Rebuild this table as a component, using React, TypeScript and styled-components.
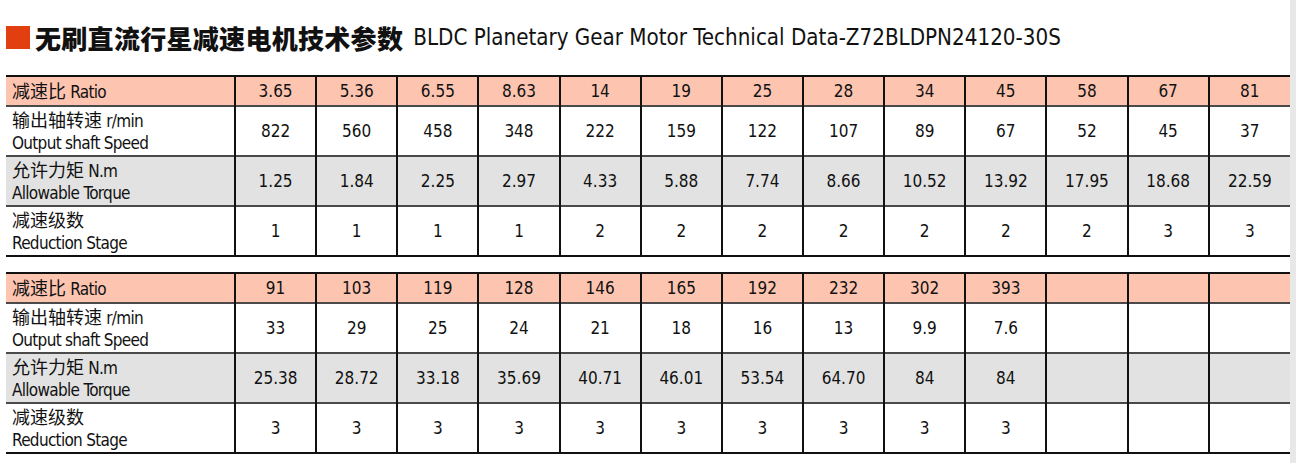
import React from "react";
import styled, { createGlobalStyle } from "styled-components";

const GlobalStyle = createGlobalStyle`
  html, body {
    margin: 0;
    padding: 0;
    background: #fff;
  }
  body {
    font-family: "DejaVu Sans Condensed", "Noto Sans CJK SC", sans-serif;
    color: #111;
  }
`;

const Page = styled.div`
  display: flex;
  width: 1296px;
  height: 463px;
  overflow: hidden;
`;

const Content = styled.div`
  flex: 1;
  padding: 20px 0 0 6px;
`;

const ScrollStrip = styled.div`
  width: 6px;
  background: #e8e8e8;
`;

const Title = styled.h1`
  display: flex;
  align-items: center;
  gap: 5px;
  margin: 0 0 21px;
  height: 34px;
  font-weight: normal;
  white-space: nowrap;
`;

const Marker = styled.span`
  width: 24px;
  height: 23px;
  background: #e13f10;
`;

const TitleCn = styled.span`
  font-family: "Noto Sans CJK SC", sans-serif;
  font-weight: 900;
  font-size: 26px;
  letter-spacing: 0.3px;
`;

const TitleEn = styled.span`
  font-family: "DejaVu Sans Condensed", sans-serif;
  font-size: 22.2px;
  margin-left: 5px;
`;

const Table = styled.table`
  width: 1284px;
  table-layout: fixed;
  border-collapse: collapse;
  border-top: 2px solid #111;
  border-bottom: 2px solid #111;
  margin-bottom: 15px;
`;

const LabelCol = styled.col`
  width: 229px;
`;

const Row = styled.tr<{ $tone: "ratio" | "plain" | "grey" }>`
  background: ${(p) =>
    p.$tone === "ratio" ? "#fdc4b0" : p.$tone === "grey" ? "#e1e2e1" : "#fff"};
  height: ${(p) => (p.$tone === "ratio" ? "30px" : "50px")};
  & + & {
    border-top: 2px solid #4a4a4a;
  }
`;

const Label = styled.th`
  text-align: left;
  font-weight: normal;
  font-size: 17px;
  letter-spacing: -0.7px;
  line-height: 22px;
  padding: 0 0 0 6px;
  vertical-align: middle;
  white-space: nowrap;
`;

const Cn = styled.span`
  font-family: "Noto Sans CJK SC", sans-serif;
  font-size: 18px;
  letter-spacing: 0;
`;

const Cell = styled.td`
  text-align: center;
  font-size: 17px;
  border-left: 2px solid #111;
  padding: 0;
`;

type Block = {
  ratio: string[];
  speed: string[];
  torque: string[];
  stage: string[];
};

const blocks: Block[] = [
  {
    ratio: ["3.65", "5.36", "6.55", "8.63", "14", "19", "25", "28", "34", "45", "58", "67", "81"],
    speed: ["822", "560", "458", "348", "222", "159", "122", "107", "89", "67", "52", "45", "37"],
    torque: ["1.25", "1.84", "2.25", "2.97", "4.33", "5.88", "7.74", "8.66", "10.52", "13.92", "17.95", "18.68", "22.59"],
    stage: ["1", "1", "1", "1", "2", "2", "2", "2", "2", "2", "2", "3", "3"],
  },
  {
    ratio: ["91", "103", "119", "128", "146", "165", "192", "232", "302", "393", "", "", ""],
    speed: ["33", "29", "25", "24", "21", "18", "16", "13", "9.9", "7.6", "", "", ""],
    torque: ["25.38", "28.72", "33.18", "35.69", "40.71", "46.01", "53.54", "64.70", "84", "84", "", "", ""],
    stage: ["3", "3", "3", "3", "3", "3", "3", "3", "3", "3", "", "", ""],
  },
];

const DataTable = ({ data }: { data: Block }) => (
  <Table>
    <colgroup>
      <LabelCol />
      {data.ratio.map((_, i) => (
        <col key={i} />
      ))}
    </colgroup>
    <tbody>
      <Row $tone="ratio">
        <Label>
          <Cn>减速比</Cn> Ratio
        </Label>
        {data.ratio.map((v, i) => (
          <Cell key={i}>{v}</Cell>
        ))}
      </Row>
      <Row $tone="plain">
        <Label>
          <Cn>输出轴转速</Cn> r/min
          <br />
          Output shaft Speed
        </Label>
        {data.speed.map((v, i) => (
          <Cell key={i}>{v}</Cell>
        ))}
      </Row>
      <Row $tone="grey">
        <Label>
          <Cn>允许力矩</Cn> N.m
          <br />
          Allowable Torque
        </Label>
        {data.torque.map((v, i) => (
          <Cell key={i}>{v}</Cell>
        ))}
      </Row>
      <Row $tone="plain">
        <Label>
          <Cn>减速级数</Cn>
          <br />
          Reduction Stage
        </Label>
        {data.stage.map((v, i) => (
          <Cell key={i}>{v}</Cell>
        ))}
      </Row>
    </tbody>
  </Table>
);

export default function App() {
  return (
    <Page>
      <GlobalStyle />
      <Content>
        <Title>
          <Marker />
          <TitleCn>无刷直流行星减速电机技术参数</TitleCn>
          <TitleEn>BLDC Planetary Gear Motor Technical Data-Z72BLDPN24120-30S</TitleEn>
        </Title>
        {blocks.map((b, i) => (
          <DataTable key={i} data={b} />
        ))}
      </Content>
      <ScrollStrip />
    </Page>
  );
}
